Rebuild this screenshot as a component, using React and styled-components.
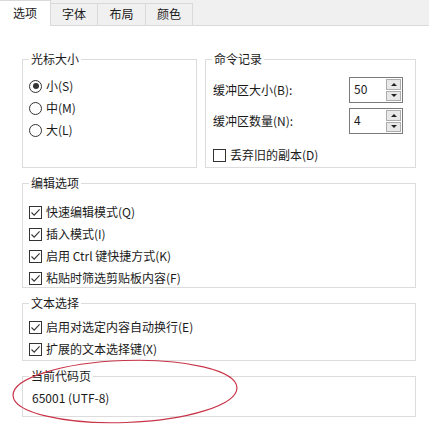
import styled, { createGlobalStyle } from "styled-components";

const GlobalStyle = createGlobalStyle`
  html, body {
    margin: 0;
    padding: 0;
    background: #ffffff;
  }
  body {
    font-family: "Noto Sans CJK SC", "Microsoft YaHei", sans-serif;
    font-size: 12px;
    color: #1a1a1a;
  }
`;

const tabs = ["选项", "字体", "布局", "颜色"];

export default function App() {
    return (
        <Window>
            <GlobalStyle />
            <TabBar>
                {tabs.map((t, i) => (
                    <Tab key={t} $active={i === 0} $w={i === 0 ? 51 : i === 2 ? 48 : 47}>
                        {t}
                    </Tab>
                ))}
            </TabBar>
            <Panel>
                <TopRow>
                    <Group $w={175} $h={117}>
                        <Legend>光标大小</Legend>
                        <Body $pt={8} $pl={6}>
                            <Row>
                                <Radio $checked />
                                小(S)
                            </Row>
                            <Row>
                                <Radio />
                                中(M)
                            </Row>
                            <Row>
                                <Radio />
                                大(L)
                            </Row>
                        </Body>
                    </Group>
                    <Group $w={211} $h={117}>
                        <Legend>命令记录</Legend>
                        <Body $pt={10} $pl={7} $pr={12}>
                            <SpinRow>
                                <span>缓冲区大小(B):</span>
                                <SpinBox value="50" />
                            </SpinRow>
                            <SpinRow $mt={5}>
                                <span>缓冲区数量(N):</span>
                                <SpinBox value="4" />
                            </SpinRow>
                            <Row $mt={10}>
                                <CheckBox />
                                丢弃旧的副本(D)
                            </Row>
                        </Body>
                    </Group>
                </TopRow>
                <Group $w={394} $h={113}>
                    <Legend>编辑选项</Legend>
                    <Body $pt={10} $pl={6}>
                        <Row>
                            <CheckBox checked />
                            快速编辑模式(Q)
                        </Row>
                        <Row>
                            <CheckBox checked />
                            插入模式(I)
                        </Row>
                        <Row>
                            <CheckBox checked />
                            启用 Ctrl 键快捷方式(K)
                        </Row>
                        <Row>
                            <CheckBox checked />
                            粘贴时筛选剪贴板内容(F)
                        </Row>
                    </Body>
                </Group>
                <Group $w={394} $h={66}>
                    <Legend>文本选择</Legend>
                    <Body $pt={5} $pl={6}>
                        <Row>
                            <CheckBox checked />
                            启用对选定内容自动换行(E)
                        </Row>
                        <Row>
                            <CheckBox checked />
                            扩展的文本选择键(X)
                        </Row>
                    </Body>
                </Group>
                <Group $w={394} $h={49}>
                    <Legend>当前代码页</Legend>
                    <Body $pt={3} $pl={9}>
                        <Row>65001 (UTF-8)</Row>
                    </Body>
                </Group>
            </Panel>
            <Marker width="429" height="424" viewBox="0 0 429 424">
                <ellipse
                    cx="125"
                    cy="391.5"
                    rx="112"
                    ry="31"
                    transform="rotate(-2 125 391.5)"
                    fill="none"
                    stroke="#c93548"
                    strokeWidth="1.2"
                />
            </Marker>
        </Window>
    );
}

function CheckBox({ checked }) {
    return (
        <Box>
            {checked && (
                <svg width="11" height="11" viewBox="0 0 11 11">
                    <path d="M1.5 5.5 L4.2 8.2 L9.6 2.4" fill="none" stroke="#333" strokeWidth="1.1" />
                </svg>
            )}
        </Box>
    );
}

function SpinBox({ value }) {
    return (
        <Spin>
            <SpinValue>{value}</SpinValue>
            <SpinButtons>
                <SpinButton>
                    <Arrow $up />
                </SpinButton>
                <SpinButton>
                    <Arrow />
                </SpinButton>
            </SpinButtons>
        </Spin>
    );
}

const Window = styled.div`
    position: relative;
    width: 429px;
    height: 424px;
    overflow: hidden;
    background: #ffffff;
`;

const TabBar = styled.div`
    display: flex;
    align-items: flex-end;
    box-sizing: border-box;
    height: 26px;
    background: #f0f0f0;
    border-bottom: 1px solid #d9d9d9;
`;

const Tab = styled.div`
    box-sizing: border-box;
    width: ${(p) => p.$w}px;
    height: ${(p) => (p.$active ? 26 : 22)}px;
    margin-bottom: ${(p) => (p.$active ? -1 : 0)}px;
    padding-top: ${(p) => (p.$active ? 4 : 2)}px;
    background: ${(p) => (p.$active ? "#ffffff" : "#f0f0f0")};
    border-top: 1px solid #d9d9d9;
    border-right: 1px solid #d9d9d9;
    text-align: center;
    line-height: 16px;
    color: #1a1a1a;
`;

const Panel = styled.div`
    display: flex;
    flex-direction: column;
    gap: 7px;
    width: 394px;
    padding: 25px 0 0 22px;
`;

const TopRow = styled.div`
    display: flex;
    gap: 8px;
`;

const Group = styled.fieldset`
    box-sizing: border-box;
    width: ${(p) => p.$w}px;
    height: ${(p) => p.$h}px;
    min-width: 0;
    margin: 0;
    padding: 0;
    border: 1px solid #dcdcdc;
`;

const Legend = styled.legend`
    margin-left: 6px;
    padding: 0 2px;
    line-height: 16px;
    font-size: 12px;
    color: #1a1a1a;
`;

const Body = styled.div`
    display: flex;
    flex-direction: column;
    padding: ${(p) => p.$pt}px ${(p) => p.$pr || 0}px 0 ${(p) => p.$pl}px;
`;

const Row = styled.div`
    display: flex;
    align-items: center;
    gap: 4px;
    height: 22px;
    margin-top: ${(p) => p.$mt || 0}px;
    line-height: 16px;
    white-space: nowrap;
`;

const Radio = styled.span`
    position: relative;
    box-sizing: border-box;
    width: 13px;
    height: 13px;
    border: 1px solid #333333;
    border-radius: 50%;
    &::after {
        content: "";
        display: ${(p) => (p.$checked ? "block" : "none")};
        position: absolute;
        left: 2.5px;
        top: 2.5px;
        width: 6px;
        height: 6px;
        border-radius: 50%;
        background: #333333;
    }
`;

const Box = styled.span`
    display: flex;
    align-items: center;
    justify-content: center;
    box-sizing: border-box;
    width: 13px;
    height: 13px;
    border: 1px solid #333333;
    background: #ffffff;
`;

const SpinRow = styled.div`
    display: flex;
    align-items: center;
    justify-content: space-between;
    height: 26px;
    margin-top: ${(p) => p.$mt || 0}px;
    line-height: 16px;
`;

const Spin = styled.div`
    display: flex;
    box-sizing: border-box;
    width: 54px;
    height: 26px;
    border: 1px solid #7a7a7a;
    background: #ffffff;
`;

const SpinValue = styled.div`
    flex: 1;
    padding-left: 4px;
    line-height: 22px;
    font-size: 12px;
`;

const SpinButtons = styled.div`
    display: flex;
    flex-direction: column;
    gap: 1px;
    padding: 1px;
`;

const SpinButton = styled.div`
    display: flex;
    align-items: center;
    justify-content: center;
    box-sizing: border-box;
    width: 15px;
    flex: 1;
    background: #e8e8e8;
    border: 1px solid #adadad;
`;

const Arrow = styled.span`
    width: 0;
    height: 0;
    border-left: 3px solid transparent;
    border-right: 3px solid transparent;
    ${(p) => (p.$up ? "border-bottom: 3px solid #222;" : "border-top: 3px solid #222;")}
`;

const Marker = styled.svg`
    position: absolute;
    left: 0;
    top: 0;
    pointer-events: none;
`;
